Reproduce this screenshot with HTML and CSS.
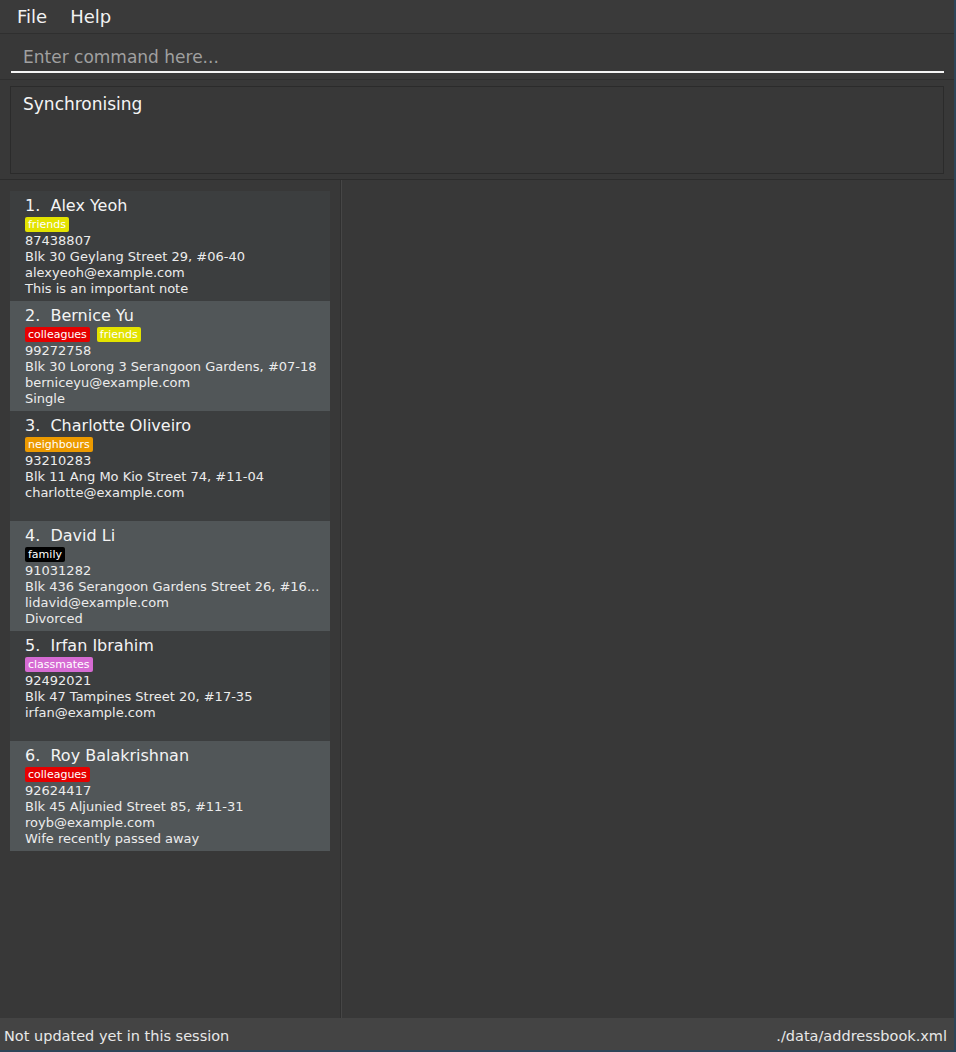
FILE: index.html
```html
<!DOCTYPE html>
<html>
<head>
<meta charset="utf-8">
<link rel="stylesheet" href="styles.css">
</head>
<body>
<div class="window">
  <div class="menubar">
    <span class="menu-item">File</span>
    <span class="menu-item">Help</span>
  </div>
  <div class="command-area">
    <div class="command-box">Enter command here...</div>
  </div>
  <div class="result-area">
    <div class="result-box">Synchronising</div>
  </div>
  <div class="main">
    <div class="list-pane">
      <div class="card odd">
        <div class="name">1.&nbsp;&nbsp;Alex Yeoh</div>
        <div class="tags"><span class="tag friends">friends</span></div>
        <div class="line">87438807</div>
        <div class="line">Blk 30 Geylang Street 29, #06-40</div>
        <div class="line">alexyeoh@example.com</div>
        <div class="line">This is an important note</div>
      </div>
      <div class="card even">
        <div class="name">2.&nbsp;&nbsp;Bernice Yu</div>
        <div class="tags"><span class="tag colleagues">colleagues</span><span class="tag friends">friends</span></div>
        <div class="line">99272758</div>
        <div class="line">Blk 30 Lorong 3 Serangoon Gardens, #07-18</div>
        <div class="line">berniceyu@example.com</div>
        <div class="line">Single</div>
      </div>
      <div class="card odd">
        <div class="name">3.&nbsp;&nbsp;Charlotte Oliveiro</div>
        <div class="tags"><span class="tag neighbours">neighbours</span></div>
        <div class="line">93210283</div>
        <div class="line">Blk 11 Ang Mo Kio Street 74, #11-04</div>
        <div class="line">charlotte@example.com</div>
        <div class="line"></div>
      </div>
      <div class="card even">
        <div class="name">4.&nbsp;&nbsp;David Li</div>
        <div class="tags"><span class="tag family">family</span></div>
        <div class="line">91031282</div>
        <div class="line">Blk 436 Serangoon Gardens Street 26, #16...</div>
        <div class="line">lidavid@example.com</div>
        <div class="line">Divorced</div>
      </div>
      <div class="card odd">
        <div class="name">5.&nbsp;&nbsp;Irfan Ibrahim</div>
        <div class="tags"><span class="tag classmates">classmates</span></div>
        <div class="line">92492021</div>
        <div class="line">Blk 47 Tampines Street 20, #17-35</div>
        <div class="line">irfan@example.com</div>
        <div class="line"></div>
      </div>
      <div class="card even">
        <div class="name">6.&nbsp;&nbsp;Roy Balakrishnan</div>
        <div class="tags"><span class="tag colleagues">colleagues</span></div>
        <div class="line">92624417</div>
        <div class="line">Blk 45 Aljunied Street 85, #11-31</div>
        <div class="line">royb@example.com</div>
        <div class="line">Wife recently passed away</div>
      </div>
    </div>
    <div class="divider"></div>
    <div class="browser-pane"></div>
  </div>
  <div class="statusbar">
    <span class="status-left">Not updated yet in this session</span>
    <span class="status-right">./data/addressbook.xml</span>
  </div>
</div>
</body>
</html>
```

FILE: styles.css
```css
* { box-sizing: border-box; }
html, body {
  margin: 0;
  padding: 0;
  width: 956px;
  height: 1052px;
  overflow: hidden;
  background: #2e4558;
  font-family: "DejaVu Sans", "Liberation Sans", sans-serif;
  color: #fff;
}
.window {
  width: 954px;
  height: 1050px;
  background: #383838;
  display: flex;
  flex-direction: column;
}
.menubar {
  height: 34px;
  background: #3a3a3a;
  border-bottom: 1px solid #2f2f2f;
  display: flex;
  align-items: center;
  padding-left: 17px;
  gap: 23px;
  font-size: 18px;
  color: #f2f2f2;
}
.command-area {
  height: 46px;
  padding: 0 10px 6px 11px;
  border-bottom: 1px solid #2f2f2f;
  display: flex;
  align-items: flex-end;
}
.command-box {
  width: 933px;
  height: 32px;
  border-bottom: 2px solid #f4f4f4;
  font-size: 17px;
  line-height: 20px;
  color: #a0a0a0;
  padding-left: 12px;
  padding-top: 6px;
}
.result-area {
  height: 100px;
  padding: 6px 11px 6px 10px;
  border-bottom: 1px solid #2c2c2c;
}
.result-box {
  width: 934px;
  height: 88px;
  border: 1px solid #2b2b2b;
  font-size: 17px;
  line-height: 20px;
  color: #f4f4f4;
  padding: 7px 12px;
}
.main {
  flex: 1;
  display: flex;
}
.list-pane {
  width: 340px;
  padding: 11px 10px 0 10px;
  display: flex;
  flex-direction: column;
}
.divider {
  width: 2px;
  background: #464646;
  border-left: 1px solid #303030;
}
.browser-pane {
  flex: 1;
}
.card {
  height: 110px;
  padding: 5px 0 0 15px;
  white-space: nowrap;
  overflow: hidden;
}
.card.odd { background: #3c3e3f; }
.card.even { background: #515658; }
.name {
  font-size: 16px;
  line-height: 20px;
  color: #f4f4f4;
}
.tags {
  height: 17px;
  display: flex;
  gap: 7px;
  padding-top: 1px;
}
.tag {
  font-size: 11px;
  line-height: 15px;
  height: 15px;
  padding: 0 3px;
  border-radius: 2px;
  color: #fff;
}
.tag.friends { background: #e3e300; }
.tag.colleagues { background: #e60000; }
.tag.neighbours { background: #ec9a00; }
.tag.family { background: #000; }
.tag.classmates { background: #d66bd3; }
.line {
  font-size: 13px;
  line-height: 16px;
  height: 16px;
  color: #ececec;
}
.statusbar {
  height: 32px;
  background: #444444;
  display: flex;
  justify-content: space-between;
  align-items: center;
  font-size: 14.5px;
  color: #e8e8e8;
  padding: 3px 7px 0 4px;
}
```
